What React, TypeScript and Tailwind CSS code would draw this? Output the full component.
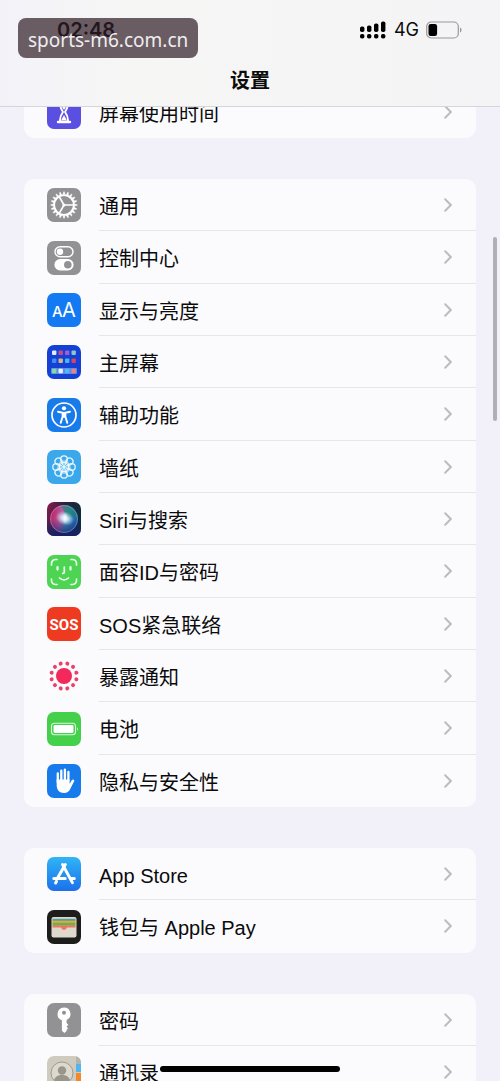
import React from 'react';

interface Item {
  label: string;
  icon: React.ReactNode;
}

interface TileProps {
  fill?: string;
  children?: React.ReactNode;
}

const Tile: React.FC<TileProps> = ({ fill = '#929294', children }) => (
  <svg viewBox="0 0 34 34" className="size-[34px] shrink-0" aria-hidden="true">
    <rect width="34" height="34" rx="7" fill={fill} />
    {children}
  </svg>
);

const spin = (count: number) => Array.from({ length: count }, (_, i) => (360 / count) * i);

const ScreenTimeIcon = () => (
  <Tile fill="#5a4fe0">
    <path d="M11 7h12M11 27h12" stroke="#fff" strokeWidth="2.4" strokeLinecap="round" />
    <path
      d="M13 7.5c0 5 .8 6.6 3 9.5-2.2 2.9-3 4.5-3 9.5h8c0-5-.8-6.6-3-9.5 2.2-2.9 3-4.5 3-9.5z"
      fill="none"
      stroke="#fff"
      strokeWidth="1.8"
    />
    <path d="M17 20l2.600 5h-5.200zM14.5 11h5l-2.500 4z" fill="#fff" />
  </Tile>
);

const GeneralIcon = () => (
  <Tile>
    {spin(20).map((a) => (
      <path key={a} d="M16 6.500l.5-2.700h1l.5 2.700z" fill="#fff" stroke="#fff" strokeWidth=".3" transform={`rotate(${a} 17 17)`} />
    ))}
    <circle cx="17" cy="17" r="9.900" fill="none" stroke="#fff" strokeWidth="1.900" />
    {[0, 120, 240].map((a) => (
      <path key={a} d="M17 17h9.500" stroke="#fff" strokeWidth="1.600" transform={`rotate(${a} 17 17)`} />
    ))}
    <circle cx="17" cy="17" r="1.600" fill="#fff" />
  </Tile>
);

const ControlCenterIcon = () => (
  <Tile>
    <rect x="8" y="5.7" width="18" height="10" rx="5" fill="none" stroke="#fff" strokeWidth="1.4" />
    <circle cx="13" cy="10.7" r="3.2" fill="#fff" />
    <rect x="7.4" y="18" width="19.2" height="11.4" rx="5.7" fill="#fff" />
    <circle cx="20.8" cy="23.7" r="3.8" fill="#929294" />
  </Tile>
);

const DisplayIcon = () => (
  <Tile fill="#147af3">
    <text x="5" y="24" fill="#fff" fontFamily="Inter, sans-serif" fontSize="15" fontWeight="500">
      A
    </text>
    <text x="15" y="24" fill="#fff" fontFamily="Inter, sans-serif" fontSize="20" fontWeight="400">
      A
    </text>
  </Tile>
);

const homeDots = [
  ['#e4ecfa', '#c94a86', '#a55bd0', '#8cc7c0'],
  ['#3f8df0', '#e0b184', '#48b4f2', '#d5455f'],
];

const HomeScreenIcon = () => (
  <Tile fill="#1440d6">
    <rect x="4" y="23" width="26" height="6" rx="1" fill="#5d8bea" />
    {homeDots.map((row, y) =>
      row.map((c, x) => <rect key={`${x}${y}`} x={5 + x * 6.5} y={5.5 + y * 8} width="4.4" height="4.4" rx="1" fill={c} />)
    )}
    {['#83dd9a', '#edf1fa', '#52b7f5', '#ee8478'].map((c, x) => (
      <rect key={c} x={5 + x * 6.5} y="23.800" width="4.4" height="4.4" rx="1" fill={c} />
    ))}
  </Tile>
);

const AccessibilityIcon = () => (
  <Tile fill="#197bea">
    <circle cx="17" cy="17" r="12" fill="none" stroke="#fff" strokeWidth="1.7" />
    <circle cx="17" cy="10.3" r="2.1" fill="#fff" />
    <path
      d="M11 13.8l4.600.9v4l-1.900 6.200M23 13.8l-4.600.9v4l1.900 6.200"
      fill="none"
      stroke="#fff"
      strokeWidth="1.9"
      strokeLinecap="round"
      strokeLinejoin="round"
    />
    <path d="M15 14.100h4v5.600h-4z" fill="#fff" />
  </Tile>
);

const WallpaperIcon = () => (
  <Tile fill="#3aa8ea">
    {spin(8).map((a) => (
      <g key={a} transform={`rotate(${a} 17 17)`} fill="none" stroke="#e8f7ff">
        <circle cx="17" cy="9.200" r="3.400" strokeWidth="1.300" />
        <circle cx="17" cy="12.600" r="1.700" strokeWidth=".9" />
      </g>
    ))}
    <circle cx="17" cy="17" r="1.900" fill="#e8f7ff" />
  </Tile>
);

const SiriIcon = () => (
  <Tile fill="url(#siriBack)">
    <defs>
      <linearGradient id="siriBack" x1="0" y1="0" x2="1" y2=".3">
        <stop offset="0" stopColor="#8a1a4c" />
        <stop offset=".5" stopColor="#2a2040" />
        <stop offset="1" stopColor="#0c2c3c" />
      </linearGradient>
      <linearGradient id="siriOrb" x1="0" y1=".4" x2="1" y2=".6">
        <stop offset="0" stopColor="#c01f62" />
        <stop offset=".4" stopColor="#b460a0" />
        <stop offset=".62" stopColor="#3c8cb4" />
        <stop offset="1" stopColor="#1c58b0" />
      </linearGradient>
      <linearGradient id="siriShade" x1="0" y1="0" x2="0" y2="1">
        <stop offset=".5" stopColor="#1a2470" stopOpacity="0" />
        <stop offset="1" stopColor="#16206c" stopOpacity=".9" />
      </linearGradient>
      <radialGradient id="siriGlow">
        <stop offset="0" stopColor="#fff" />
        <stop offset=".35" stopColor="#eaf6ff" stopOpacity=".8" />
        <stop offset="1" stopColor="#bfe6ff" stopOpacity="0" />
      </radialGradient>
    </defs>
    <circle cx="17" cy="17" r="14" fill="url(#siriOrb)" />
    <path d="M14 3.500c9-2 16 4 17 12-5 0-9-1-13 2 0-5-1-10-4-14z" fill="#1f7f72" opacity=".65" />
    <rect width="34" height="34" rx="7" fill="url(#siriShade)" />
    <circle cx="17" cy="17" r="13.5" fill="none" stroke="#a7bfd8" strokeWidth=".7" opacity=".6" />
    <ellipse cx="17.500" cy="16" rx="9.500" ry="7" fill="url(#siriGlow)" transform="rotate(20 17 17)" />
    <ellipse cx="18" cy="16" rx="3" ry="6" fill="url(#siriGlow)" />
  </Tile>
);

const FaceIdIcon = () => (
  <Tile fill="#4cd452">
    <g fill="none" stroke="#ecffec" strokeWidth="1.7" strokeLinecap="round">
      <path d="M4.5 10V8.5a4 4 0 0 1 4-4H10M24 4.5h1.5a4 4 0 0 1 4 4V10M29.500 24v1.5a4 4 0 0 1-4 4H24M10 29.5H8.500a4 4 0 0 1-4-4V24" />
      <path d="M10.5 12v2.6M23.5 12v2.6" strokeWidth="2.2" />
      <path d="M17.3 12v5.200c0 .8-.4 1.200-1.600 1.200M12.5 23c2.600 2.400 6.400 2.400 9 0" />
    </g>
  </Tile>
);

const SosIcon = () => (
  <Tile fill="#ee3a20">
    <text x="17" y="22.500" textAnchor="middle" fill="#fff" fontFamily="Roboto, sans-serif" fontSize="15" fontWeight="700">
      SOS
    </text>
  </Tile>
);

const ExposureIcon = () => (
  <Tile fill="#fdfbfd">
    <circle cx="17" cy="17" r="8" fill="#f4285a" />
    {spin(12).map((a) => (
      <circle key={a} cx="17" cy="4.200" r="2" fill="#e8426a" transform={`rotate(${a + 15} 17 17)`} />
    ))}
  </Tile>
);

const BatteryIcon = () => (
  <Tile fill="#45d04b">
    <rect x="4.5" y="11.2" width="24" height="11.6" rx="3" fill="none" stroke="#d8f8d8" strokeWidth="1.1" />
    <rect x="6.500" y="13" width="20" height="8" rx="1.4" fill="#fff" />
    <path d="M30 15.2c1.200.6 1.200 3 0 3.6z" fill="#d8f8d8" />
  </Tile>
);

const PrivacyIcon = () => (
  <Tile fill="#187bec">
    <g stroke="#fff" strokeLinecap="round" fill="none">
      <path d="M10.8 18V9.5M14.3 16V6.7M17.9 16V5.6M21.4 17V8" strokeWidth="2.3" />
      <path d="M22.500 22.500l3.500-5.700" strokeWidth="2.600" />
    </g>
    <path d="M9.65 15.5h12.900v4.200l2.200-1.700 1.500.6-3 6.400c-1.300 2.700-3.300 4-6.200 4-4.600 0-7.400-3-7.400-8z" fill="#fff" />
  </Tile>
);

const AppStoreIcon = () => (
  <Tile fill="url(#storeBack)">
    <defs>
      <linearGradient id="storeBack" x1="0" y1="0" x2="0" y2="1">
        <stop offset="0" stopColor="#2fb5f5" />
        <stop offset="1" stopColor="#1d70eb" />
      </linearGradient>
    </defs>
    <g stroke="#fff" strokeWidth="3" strokeLinecap="round" fill="none">
      <path d="M18.3 7.600L11 20.200M9.500 24.300l-.9 1.600M15.600 7.600l9.800 18" />
      <path d="M6.800 21.400h11.400M23.700 21.400h3.600" />
    </g>
  </Tile>
);

const WalletIcon = () => (
  <Tile fill="#1d1d1c">
    <rect x="4.5" y="7" width="25" height="20.5" rx="2" fill="#ded9cc" />
    <path d="M5.5 8.800h23v2.500h-23z" fill="#5a9ba8" />
    <path d="M5.5 10.800h23v2.800h-23z" fill="#d9b034" />
    <path d="M5.5 12.800h23v3h-23z" fill="#75ad48" />
    <path d="M5.5 15.500h23v2h-8c-1 0-1 2.300-3.500 2.300s-2.500-2.300-3.500-2.300h-8z" fill="#ed7565" />
  </Tile>
);

const PasswordIcon = () => (
  <Tile>
    <path
      fillRule="evenodd"
      d="M17 4.500a6.600 6.600 0 0 1 2.600 12.600v3l1.700 1.700-1.700 1.700 1.400 1.800-1.400 1.600v1L17.400 30l-2.500-2.200V17.300A6.600 6.600 0 0 1 17 4.500zm0 3.200a2 2 0 1 0 0 4 2 2 0 0 0 0-4z"
      fill="#fff"
    />
  </Tile>
);

const ContactsIcon = () => (
  <Tile fill="#cfcbbf">
    <path d="M29 .3a7 7 0 0 1 5 6.700v1h-5z" fill="#b4b3ac" />
    <path d="M29 8h5v8h-5z" fill="#54b4ee" />
    <path d="M29 17h5v9h-5z" fill="#f4892b" />
    <circle cx="15" cy="17" r="11" fill="#dcd9cf" stroke="#9d9a90" strokeWidth="1" />
    <circle cx="15" cy="14.5" r="4.2" fill="#99958b" />
    <path d="M7 24c1.500-4 4.500-5 8-5s6.500 1 8 5c-4 5-12 5-16 0z" fill="#99958b" />
  </Tile>
);

const groups: Item[][] = [
  [{ label: '屏幕使用时间', icon: <ScreenTimeIcon /> }],
  [
    { label: '通用', icon: <GeneralIcon /> },
    { label: '控制中心', icon: <ControlCenterIcon /> },
    { label: '显示与亮度', icon: <DisplayIcon /> },
    { label: '主屏幕', icon: <HomeScreenIcon /> },
    { label: '辅助功能', icon: <AccessibilityIcon /> },
    { label: '墙纸', icon: <WallpaperIcon /> },
    { label: 'Siri与搜索', icon: <SiriIcon /> },
    { label: '面容ID与密码', icon: <FaceIdIcon /> },
    { label: 'SOS紧急联络', icon: <SosIcon /> },
    { label: '暴露通知', icon: <ExposureIcon /> },
    { label: '电池', icon: <BatteryIcon /> },
    { label: '隐私与安全性', icon: <PrivacyIcon /> },
  ],
  [
    { label: 'App Store', icon: <AppStoreIcon /> },
    { label: '钱包与 Apple Pay', icon: <WalletIcon /> },
  ],
  [
    { label: '密码', icon: <PasswordIcon /> },
    { label: '通讯录', icon: <ContactsIcon /> },
  ],
];

const Row: React.FC<Item> = ({ label, icon }) => (
  <li className="group h-[52px] nth-[3n+2]:h-[53px]">
    <a href="#" className="flex h-full items-center gap-[18px] pl-[23px]">
      {icon}
      <span className="flex h-full flex-1 items-center justify-between border-b border-[#e6e5e8] pr-6 group-last:border-transparent">
        <span className="pt-1 text-xl leading-6 whitespace-nowrap">{label}</span>
        <svg viewBox="0 0 8 14" className="h-3.5 w-2" fill="none" aria-hidden="true">
          <path d="M1.200 1.200L6.800 7l-5.600 5.800" stroke="#bdbdc0" strokeWidth="2" strokeLinecap="round" />
        </svg>
      </span>
    </a>
  </li>
);

const SignalIcon = () => (
  <svg viewBox="0 0 27 18" className="h-[18px] w-[27px]" aria-hidden="true">
    {[5, 4, 2, 0].map((top, i) => (
      <g key={top}>
        <rect x={i * 7} y={top + 0.5} width="4.4" height={10.5 - top} rx="1.8" />
        <rect x={i * 7} y="13" width="4.4" height="4.6" rx="1.8" />
      </g>
    ))}
  </svg>
);

const StatusBattery = () => (
  <svg viewBox="0 0 36 18" className="h-[18px] w-9" aria-hidden="true">
    <rect x=".7" y="1" width="31.6" height="16" rx="4.5" fill="none" stroke="#98989a" strokeWidth="1.2" />
    <rect x="2.500" y="3" width="8.600" height="12" rx="2.200" />
    <path d="M34 6.500c2 .8 2 4.200 0 5z" fill="#98989a" />
  </svg>
);

const StatusBar: React.FC = () => (
  <div className="flex h-14 items-center justify-between pt-1 pr-[38px] pl-[57px] font-['Inter',sans-serif]">
    <span className="text-xl leading-6 font-semibold">02:48</span>
    <div className="flex items-center gap-[7px]">
      <SignalIcon />
      <span className="text-lg leading-6">4G</span>
      <StatusBattery />
    </div>
  </div>
);

export default function App() {
  return (
    <div className="relative h-screen overflow-hidden bg-[#f2f0f8] font-['Liberation_Sans','Noto_Sans_CJK_SC',sans-serif] text-[#0b0b0c]">
      <header className="relative z-10 border-b border-[#d6d6da] bg-linear-to-r from-[#f3f2f9] via-[#f6f6f5] via-25% to-[#f4f4f6]">
        <StatusBar />
        <h1 className="flex h-[50px] items-center justify-center text-xl font-semibold">设置</h1>
        <div className="absolute top-[18px] left-[18px] rounded-lg bg-[#2d1b24]/70 px-2.5 pt-2 pb-1 font-['Noto_Sans',sans-serif] text-[19px] leading-7 text-[#f0edef]">
          sports-m6.com.cn
        </div>
      </header>

      <main className="-mt-[21px] flex flex-col gap-[41px] px-6">
        {groups.map((items) => (
          <ul key={items[0].label} className="overflow-hidden rounded-[10px] bg-[#fbfbfe]">
            {items.map((item) => (
              <Row key={item.label} {...item} />
            ))}
          </ul>
        ))}
      </main>

      <div className="absolute top-[237px] right-[3px] h-[184px] w-1 rounded-full bg-[#b0afb8]" />
      <div className="absolute bottom-[9px] left-1/2 h-1.5 w-[36%] -translate-x-1/2 rounded-full bg-black" />
    </div>
  );
}
